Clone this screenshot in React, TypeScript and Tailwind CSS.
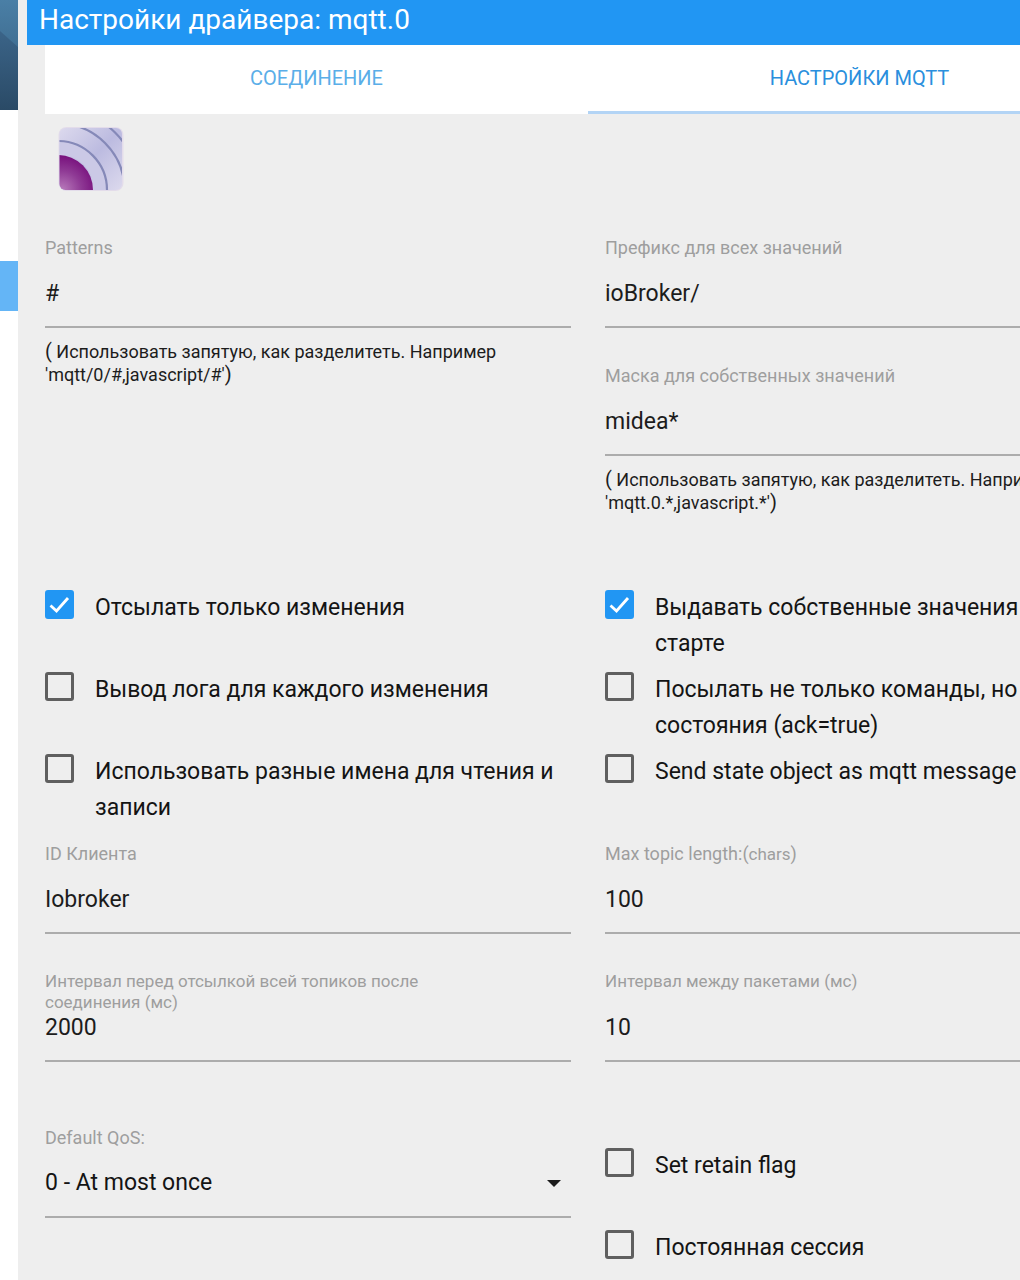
import { useState, type ReactNode } from "react";

type FieldProps = {
    id: string,
    label: ReactNode,
    value: string,
    small?: boolean,
    hint?: string,
};

function FieldLabel({id, small, children}: {id: string, small?: boolean, children: ReactNode}) {
    // long labels spill over the input below, the line box keeps its height
    return (
        <label htmlFor={id} className={small ? "block h-6 max-w-[420px] pt-px text-[17px] leading-[21px] text-[#9e9e9e]" : "block h-6 text-lg leading-6 text-[#9e9e9e]"}>
            {children}
        </label>
    );
}

function Field({id, label, value, small, hint}: FieldProps) {
    return (
        <div>
            <FieldLabel id={id} small={small}>{label}</FieldLabel>
            <input id={id} type="text" defaultValue={value} className="block h-[68px] w-full border-b-2 border-[#acacac] bg-transparent text-[23px] text-[#1c1c1c] outline-none" />
            {hint && (
                <p className="pt-3 text-lg leading-[23px] text-[#1c1c1c]">
                    <span className="text-xl leading-none">(</span> {hint}<span className="text-xl leading-none">)</span>
                </p>
            )}
        </div>
    );
}

function Check({id, label, defaultChecked}: {id: string, label: string, defaultChecked?: boolean}) {
    const [checked, setChecked] = useState(!!defaultChecked);

    return (
        <div className="flex min-h-[72px] items-start gap-[21px]">
            <div className="grid shrink-0">
                <input
                    id={id}
                    type="checkbox"
                    checked={checked}
                    onChange={(e) => setChecked(e.target.checked)}
                    className="col-start-1 row-start-1 size-[29px] appearance-none rounded-[3px] border-3 border-[#5f5f5f] checked:border-[#2196f3] checked:bg-[#2196f3]"
                />
                {checked && (
                    <svg viewBox="0 0 29 29" className="pointer-events-none col-start-1 row-start-1 size-[29px]" fill="none" stroke="#fff" strokeWidth="2.8">
                        <path d="M5.5 15.5l6 5.5L23 8" />
                    </svg>
                )}
            </div>
            <label htmlFor={id} className="text-[23px] leading-9 text-[#141414]">{label}</label>
        </div>
    );
}

function MqttLogo() {
    return (
        <svg viewBox="0 0 66 66" className="size-[66px]" role="img" aria-label="MQTT">
            <defs>
                <clipPath id="tile"><rect x="1.5" y="2" width="62.5" height="62" rx="6" /></clipPath>
                <radialGradient id="core" gradientUnits="userSpaceOnUse" cx="4" cy="64" r="35">
                    <stop offset="0" stopColor="#b87abb" />
                    <stop offset="0.55" stopColor="#8f3a95" />
                    <stop offset="1" stopColor="#770f7c" />
                </radialGradient>
                <linearGradient id="wave" x1="0" y1="0" x2="1" y2="1">
                    <stop offset="0" stopColor="#dedbee" />
                    <stop offset="0.5" stopColor="#bcbbe0" />
                    <stop offset="1" stopColor="#dedbee" />
                </linearGradient>
            </defs>
            <rect x="0.5" y="1" width="65" height="64" rx="8" fill="#e3dcea" />
            <g clipPath="url(#tile)">
                <rect width="66" height="66" fill="url(#wave)" />
                <circle cx="0" cy="64" r="42" fill="none" stroke="#cbc9e6" strokeWidth="12" />
                <circle cx="0" cy="64" r="81" fill="none" stroke="#8589b8" strokeWidth="2.2" />
                <circle cx="0" cy="64" r="66.5" fill="none" stroke="#8589b8" strokeWidth="2.2" />
                <circle cx="0" cy="64" r="49" fill="none" stroke="#8589b8" strokeWidth="2.2" />
                <circle cx="0" cy="64" r="35" fill="url(#core)" />
            </g>
        </svg>
    );
}

function Sidebar() {
    return (
        <aside className="w-[18px] shrink-0 bg-white">
            <svg viewBox="0 0 18 110" preserveAspectRatio="none" className="block h-[110px] w-full">
                <defs>
                    <linearGradient id="sky" x1="0" y1="0" x2="0" y2="1">
                        <stop offset="0" stopColor="#4a7fa6" />
                        <stop offset="1" stopColor="#335a7a" />
                    </linearGradient>
                    <linearGradient id="slope" x1="0" y1="0" x2="0" y2="1">
                        <stop offset="0" stopColor="#3b6488" />
                        <stop offset="1" stopColor="#2a4a66" />
                    </linearGradient>
                </defs>
                <rect width="18" height="110" fill="url(#sky)" />
                <path d="M0 31L18 47V110H0Z" fill="url(#slope)" />
            </svg>
            <div className="mt-[151px] h-[50px] bg-[#64b5f6]" />
        </aside>
    );
}

export default function App() {
    return (
        <div className="flex min-h-screen overflow-hidden bg-[#eeeeee] font-['Roboto','Noto_Sans',sans-serif]">
            <Sidebar />
            {/* the dialog is wider than a narrow window and runs off its right edge */}
            <main className="min-w-[1130px] flex-1 pl-[9px]">
                <header className="h-[45px] bg-[#2196f3] pl-3">
                    <h1 className="text-[28px] leading-10 text-white">Настройки драйвера: mqtt.0</h1>
                </header>
                <div className="pr-[17px] pl-[18px]">
                    <nav className="grid h-[69px] grid-cols-2 bg-white text-center text-xl leading-[66px]">
                        <a href="#connection" className="text-[#5aaee8]">СОЕДИНЕНИЕ</a>
                        <a href="#mqtt" className="border-b-3 border-[#b3d4f5] text-[#2a8fdd]">НАСТРОЙКИ MQTT</a>
                    </nav>
                    <div className="px-[13px] pt-3 pb-11">
                        <MqttLogo />
                    </div>

                    <section className="grid grid-cols-2 gap-x-[34px]">
                        <Field id="patterns" label="Patterns" value="#" hint="Использовать запятую, как разделитеть. Например 'mqtt/0/#,javascript/#'" />
                        <div className="space-y-9">
                            <Field id="prefix" label="Префикс для всех значений" value="ioBroker/" />
                            <Field id="mask" label="Маска для собственных значений" value="midea*" hint="Использовать запятую, как разделитеть. Например 'mqtt.0.*,javascript.*'" />
                        </div>
                    </section>

                    <section className="mt-19 grid grid-cols-2 gap-x-[34px] gap-y-[10px]">
                        <Check id="onchange" label="Отсылать только изменения" defaultChecked />
                        <Check id="publishAllOnStart" label="Выдавать собственные значения при старте" defaultChecked />
                        <Check id="debug" label="Вывод лога для каждого изменения" />
                        <Check id="sendAckToo" label="Посылать не только команды, но и состояния (ack=true)" />
                        <Check id="extraSet" label="Использовать разные имена для чтения и записи" />
                        <Check id="sendStateObject" label="Send state object as mqtt message" />
                    </section>

                    <section className="mt-4 grid grid-cols-2 gap-x-[34px] gap-y-9">
                        <Field id="clientId" label="ID Клиента" value="Iobroker" />
                        <Field id="maxTopicLength" label={<>Max topic length:(<span className="text-[17px]">chars</span>)</>} value="100" />
                        <Field id="sendOnStartInterval" label="Интервал перед отсылкой всей топиков после соединения (мс)" value="2000" small />
                        <Field id="sendInterval" label="Интервал между пакетами (мс)" value="10" small />
                    </section>

                    <section className="mt-16 grid grid-cols-2 gap-x-[34px]">
                        <div>
                            <FieldLabel id="defaultQoS">Default QoS:</FieldLabel>
                            <div className="grid items-center border-b-2 border-[#acacac]">
                                <select id="defaultQoS" className="col-start-1 row-start-1 h-[66px] w-full appearance-none bg-transparent text-[23px] text-[#141414] outline-none">
                                    <option>0 - At most once</option>
                                    <option>1 - At least once</option>
                                    <option>2 - Exactly once</option>
                                </select>
                                <svg viewBox="0 0 14 7" className="pointer-events-none col-start-1 row-start-1 mr-[10px] h-[7px] w-[14px] justify-self-end" fill="#1c1c1c">
                                    <path d="M0 0h14L7 7z" />
                                </svg>
                            </div>
                        </div>
                        <div className="space-y-[10px] pt-[22px]">
                            <Check id="retain" label="Set retain flag" />
                            <Check id="persistent" label="Постоянная сессия" />
                        </div>
                    </section>
                </div>
            </main>
        </div>
    );
}
